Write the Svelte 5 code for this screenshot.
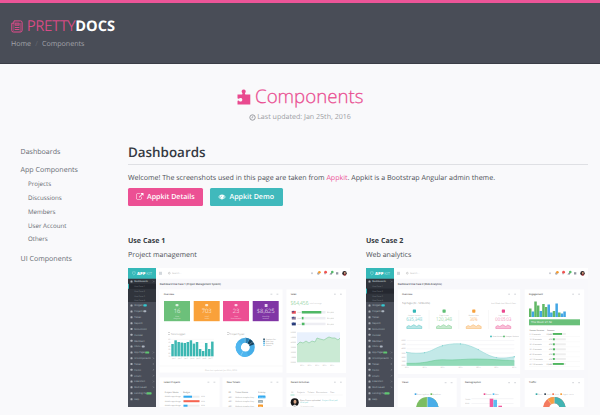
<script>
  const sideRows = [
    ['Dashboards', 13.5], ['Widgets', 37.5], ['Projects', 43.5], ['Tables', 49.3], ['Reports', 55.3],
    ['Discussions', 61], ['Invoices', 66.8], ['Members', 72.8], ['Inbox', 78.5], ['App Pages', 84.5],
    ['UI Components', 90.3], ['Tables', 96], ['Forms', 101.8], ['Charts', 107.7], ['Calendars', 113.5],
    ['Multi Levels', 119.3], ['Landing Page', 125.3], ['Help', 131.3]
  ];
  const tiles = [
    [36, '#6cc07a', '16', 'New', 'Projects'],
    [65.7, '#f9a13a', '703', 'Total', 'Tasks'],
    [95, '#ec4f93', '23', 'New', 'Discussions'],
    [124.7, '#8035a5', '$8,625', 'Monthly', 'Income']
  ];
  const bars = [12.3, 16, 14.3, 13.7, 13.3, 14.3, 16, 12.7, 14.3, 7.3, 5.3, 13.3, 7.3, 14.7];
  const metrics = [
    [48.3, '#35b8b8', '635,348', 'Unique Visitors'],
    [78, '#5fbf75', '120,348', 'Page Views'],
    [107.7, '#f7a13c', '36%', 'Bounce Rate'],
    [137.3, '#ea4b90', '00:05:03', 'Avg. Session']
  ];
  const engage = [8.5, 5.5, 15.5, 11.5, 6, 13, 10, 12.5, 4.5, 6, 13.5, 4.5, 3.5, 5.5];
  const countries = [[42, 9.2], [58, 2], [73, 2], [88, 2.2], [103, 2], [117, 2], [132, 11]];
  const arc = (cx, cy, r, a, b) => {
    const p = (t) => [cx + r * Math.sin(t * 2 * Math.PI), cy - r * Math.cos(t * 2 * Math.PI)];
    const [x1, y1] = p(a), [x2, y2] = p(b);
    return `M${x1} ${y1}A${r} ${r} 0 ${b - a > 0.5 ? 1 : 0} 1 ${x2} ${y2}`;
  };
</script>

{#snippet chrome(active, title, width)}
  <rect width="222" height="139" fill="#f8f8fb" />
  <rect x="28" width="194" height="10.7" fill="#fff" />
  <rect width="28" height="139" fill="#494d58" />
  <rect y="10.7" width="28" height="23.3" fill="#30343c" />
  <rect y={active - 2.7} width="28" height="5" fill="#252830" />
  <rect y={active - 2.7} width="1" height="5" fill="#35b8b8" />
  <rect width="28" height="10.7" fill="#35b8b8" />
  <path d="M4.6 3.8h2.6v2L5.9 7 4.6 5.8z" fill="none" stroke="#9fe0e0" stroke-width=".5" />
  <text class="brand" x="9" y="6.8" font-size="4.3" font-weight="800" fill="#fff" textLength="8.3" lengthAdjust="spacingAndGlyphs">APP</text>
  <text class="brand" x="18.2" y="6.8" font-size="4.3" font-weight="300" fill="#d5f3f3" textLength="6" lengthAdjust="spacingAndGlyphs">KIT</text>
  {#each sideRows as [name, y], i}
    <rect x="2.5" y={y - 1.1} width="2" height="2" rx=".5" fill="#c7cad0" opacity=".8" />
    <text x="6.3" {y} dy=".8" font-size="2.3" fill="#dfe1e5" font-weight={i === 0 ? 700 : 400}>{name}</text>
    {#if i === 0 || i > 8 && i < 16}<path d="M25 {y - .8}l.8.8-.8.8" fill="none" stroke="#aeb1b8" stroke-width=".4" />{/if}
  {/each}
  {#each [18.5, 23.3, 28, 32.6] as y, i}
    <text x="6.3" {y} dy=".8" font-size="2.1" fill="#9da1aa">Use Case {i + 1}</text>
  {/each}
  <rect x="15.3" y="36.3" width="3.5" height="2.2" rx=".7" fill="#35c8d0" />
  <rect x="15.3" y="42.3" width="3" height="2" rx=".7" fill="#aab2bd" />
  <rect x="13.7" y="77.5" width="3" height="2" rx=".7" fill="#aab2bd" />
  <rect x="17.2" y="83.4" width="4" height="2.2" rx=".7" fill="#5fc771" />
  <rect x="18.6" y="124.2" width="5" height="2.2" rx=".7" fill="#5fc771" />
  <path d="M31 4.3h3M31 5.3h3M31 6.3h3" stroke="#9fa8b5" stroke-width=".5" />
  <circle cx="41.3" cy="5.2" r=".9" fill="none" stroke="#999" stroke-width=".4" />
  <text x="44" y="6.1" font-size="2.4" fill="#aaa">Search...</text>
  <circle cx="184" cy="5.3" r="1" fill="#c9ccd3" />
  <circle cx="190.3" cy="5.5" r="1.2" fill="#a8adb8" /><circle cx="191.4" cy="4.2" r="1.3" fill="#f79a2d" />
  <circle cx="197" cy="5.5" r="1" fill="#c2c5cd" /><circle cx="197.6" cy="4.2" r="1.4" fill="#ef5350" />
  <path d="M201.4 6.5l2.6-3v3z" fill="#8b929f" /><circle cx="204.3" cy="4.1" r="1.3" fill="#55bb6a" />
  <rect x="208" y="4.2" width="2.3" height="2.3" fill="#9297a4" />
  <circle cx="216.5" cy="5.3" r="2.2" fill="#30282a" /><circle cx="216.8" cy="4.9" r="1" fill="#d79c7b" /><path d="M215.3 7q1.5-1.5 3 0l-1.4.7z" fill="#c33c40" />
  <text class="title" x="31.8" y="16.500" font-size="2.8" font-weight="600" fill="#444852" textLength={width} lengthAdjust="spacingAndGlyphs">{title}</text>
{/snippet}

{#snippet card(x, y, w, h, title)}
  <rect {x} {y} width={w} height={h} fill="#fff" />
  <text class="title" x={x + 4.3} y={y + 5.4} font-size="2.3" font-weight="600" fill="#555">{title}</text>
  <path d="M{x + w - 12} {y + 4.7}h1.8M{x + w - 6} {y + 4.7}h1.8" stroke="#c8cad0" stroke-width=".8" />
{/snippet}

<div class="page">
  <header>
    <div class="logo">
      <svg width="12" height="13" viewBox="0 0 12 13" fill="none" stroke="#e84b8e">
        <path d="M3 .9h6.500q1.600 0 1.600 1.600v7.800q0 1.700-1.700 1.700H2.400Q.8 12 .8 10.500V3.200h2z" stroke-width="1" />
        <path d="M2.800 3v6.700q0 .9-.8.9M9.300 3v8.700" stroke-width=".5" />
        <path d="M4 3h4.200v2.400H4z" fill="#e84b8e" fill-opacity=".5" stroke-width=".6" />
        <path d="M3.800 7.500h4.600M3.800 9.500h4.600" stroke-width=".9" />
      </svg>
      <span class="pretty">PRETTY</span><b>DOCS</b>
    </div>
    <nav class="crumbs"><span>Home</span><i>/</i><span>Components</span></nav>
  </header>

  <section class="intro">
    <h1>
      <svg width="14" height="16" viewBox="0 0 14 16"><path fill="#e94a8f" d="M.5 5.4h4.2c1 0 .9-.8.5-1.4C4 2.300 4.700.4 6.700.4s2.700 1.900 1.500 3.600c-.4.6-.5 1.400.5 1.400h4.600v10H.5v-3.100c.1-.9.9-.8 1.500-.4 1.500 1.100 3.300.6 3.300-1.200S3.500 8.400 2 9.500c-.6.4-1.400.5-1.500-.4z" /></svg>
      <span>Components</span>
    </h1>
    <p>
      <svg width="7" height="7" viewBox="0 0 7 7" fill="none" stroke="#999ba1"><circle cx="3.500" cy="3.500" r="2.700" stroke-width="1" /><path d="M3.700 1.800v2H2.300" stroke-width=".7" /></svg>
      <span>Last updated: Jan 25th, 2016</span>
    </p>
  </section>

  <div class="body">
    <aside>
      <a class="top">Dashboards</a>
      <a class="top">App Components</a>
      <div class="sub">
        <a>Projects</a><a>Discussions</a><a>Members</a><a>User Account</a><a>Others</a>
      </div>
      <a class="top">UI Components</a>
    </aside>

    <main>
      <h2>Dashboards</h2>
      <p class="welcome">Welcome! The screenshots used in this page are taken from <em>Appkit</em>. Appkit is a Bootstrap Angular admin theme.</p>
      <div class="buttons">
        <a class="btn pink">
          <svg width="7.500" height="7.500" viewBox="0 0 1792 1792"><path fill="#fff" d="M1408 928v320q0 119-84.500 203.500t-203.500 84.500h-832q-119 0-203.500-84.500t-84.500-203.500v-832q0-119 84.500-203.500t203.500-84.500h704q14 0 23 9t9 23v64q0 14-9 23t-23 9h-704q-66 0-113 47t-47 113v832q0 66 47 113t113 47h832q66 0 113-47t47-113v-320q0-14 9-23t23-9h64q14 0 23 9t9 23zm384-864v512q0 26-19 45t-45 19-45-19l-176-176-652 652q-10 10-23 10t-23-10l-114-114q-10-10-10-23t10-23l652-652-176-176q-19-19-19-45t19-45 45-19h512q26 0 45 19t19 45z" /></svg>
          <span>Appkit Details</span>
        </a>
        <a class="btn teal">
          <svg width="8" height="6" viewBox="0 0 8 6"><path fill="#fff" fill-rule="evenodd" d="M.3 3Q1.800.6 4 .6T7.700 3Q6.200 5.400 4 5.400T.3 3zm.8 0Q2 4.500 4 4.800 6 4.500 6.900 3 6.400 2.100 5.500 1.500a1.900 1.900 0 1 1-3 0Q1.600 2.100 1.100 3zM3 2.800h.5q0-.6.6-.7v-.4Q3 1.800 3 2.800z" /></svg>
          <span>Appkit Demo</span>
        </a>
      </div>

      <div class="cases">
        <article>
          <h3>Use Case 1</h3>
          <p>Project management</p>
          <svg class="shot" width="222" height="139" viewBox="0 0 222 139">
            {@render chrome(18.5, 'Dashboard Use Case 1 (Project Management System)', 61)}
            {@render card(31.5, 21.5, 123, 83, 'Overview')}
            {@render card(158.5, 21.5, 59.500, 83.500, 'Sales')}
            {@render card(31.5, 109.5, 60, 30, 'Latest Projects')}
            {@render card(94.5, 109.5, 60, 30, 'New Tickets')}
            {@render card(158.5, 109.5, 59.500, 30, 'Recent Activities')}
            {#each tiles as [x, color, value, a, b], i}
              <rect {x} y="33" width="26" height="20.200" fill={color} />
              {#if i === 3}<path d="M{x + 12} 39v-3h2.800v3z" fill="#fff" opacity=".8" />
              {:else}<rect x={x + 11.500} y="36" width="3" height="2.300" rx=".8" fill="#fff" opacity=".75" />{/if}
              <text class="strong" x={x + 13} y="45.200" font-size="5.800" font-weight="300" fill="#fff" text-anchor="middle">{value}</text>
              <text x={x + 13} y="48.700" font-size="1.900" fill="#fff" text-anchor="middle">{a}</text>
              <text x={x + 13} y="51.200" font-size="1.900" fill="#fff" text-anchor="middle">{b}</text>
            {/each}
            <rect x="40.300" y="64.800" width="1.500" height="1.500" fill="none" stroke="#999" stroke-width=".4" />
            <text x="42.800" y="66.500" font-size="2.300" fill="#777">Tasks Logged</text>
            <rect x="99.600" y="64.800" width="1.500" height="1.500" fill="none" stroke="#999" stroke-width=".4" />
            <text x="102" y="66.500" font-size="2.300" fill="#777">Project Types</text>
            {#each [0, 1, 2, 3, 4, 5] as i}
              <text x="42.300" y={72 + i * 3.400} font-size="1.800" fill="#888" text-anchor="end">{60 - i * 10}</text>
              <path d="M43 {71.400 + i * 3.400}h43" stroke="#eee" stroke-width=".3" />
            {/each}
            {#each bars as h, i}
              <rect x={43.300 + i * 3.060} y={88.300 - h} width="2.500" height={h} fill="#3cb7b2" />
            {/each}
            {#each [0, 1, 2, 3, 4, 5, 6] as i}
              <text x={44 + i * 6.100} y="91" font-size="1.700" fill="#888">Jan {i + 1}</text>
            {/each}
            <circle cx="117.300" cy="79.300" r="7" fill="none" stroke="#45aee8" stroke-width="5" />
            <path d={arc(117.300, 79.300, 7, 0.08, 0.2)} fill="none" stroke="#17435f" stroke-width="5" />
            <path d={arc(117.300, 79.300, 7, 0, 0.07)} fill="none" stroke="#2c80b3" stroke-width="5" />
            <path d={arc(117.300, 79.300, 7, 0.45, 0.86)} fill="none" stroke="#4fb6ef" stroke-width="5" />
            <path d="M117.300 69.800v5M121 76.800l4.500-3.500M115 83.500l-2.500 4.500" stroke="#fff" stroke-width=".3" />
            {#each ['Product Dev', 'Web App', 'Branding', 'Mobile'] as t, i}
              <rect x="135.300" y={70.500 + i * 2} width="1.500" height="1.500" fill={['#17435f', '#2c80b3', '#45aee8', '#74caf8'][i]} />
              <text x="137.700" y={72 + i * 2} font-size="1.800" fill="#777">{t}</text>
            {/each}
            <path d="M31.500 98h123" stroke="#eee" stroke-width=".4" />
            <text x="93" y="102.700" font-size="2.100" fill="#aaa" text-anchor="middle">Data last updated: Jan 25th, 2016</text>

            <text class="strong" x="162.500" y="37.300" font-size="5.600" font-weight="300" fill="#66c178" textLength="18" lengthAdjust="spacingAndGlyphs">$64,456</text>
            <text x="181.500" y="35.500" font-size="1.900" fill="#aaa">total earnings</text>
            {#each [[44.300, 19.500], [50.200, 1.700], [56, 2.700]] as [y, w], i}
              <rect x="163.800" y={y - 1.400} width="4" height="2.800" fill={['#e84c54', '#8a7897', '#273a75'][i]} />
              <path d="M163.800 {y - .5}h1.800v-.9" stroke="#334a91" stroke-width=".9" fill="none" />
              <text x="169.300" y={y + .7} font-size="1.900" fill="#888">USD</text>
              <rect x="173.800" y={y - 1.300} width="23.700" height="2.500" fill="#eeeef3" />
              <rect x="173.800" y={y - 1.300} width={w} height="2.500" fill="#4fb865" />
              <text x="199" y={y + .7} font-size="1.900" fill="#777">$35,200</text>
            {/each}
            <rect x="169" y="64.300" width="43" height="30" fill="#e9f1fd" />
            <path d="M169 77l3-3 3 1 3-2 3 2 3-2 3 1 2-4 3 1 4 1 3-2 2-1 3 1 3 0 3 2 2-2V94.300h-43z" fill="#caead4" />
            <path d="M169 77l3-3 3 1 3-2 3 2 3-2 3 1 2-4 3 1 4 1 3-2 2-1 3 1 3 0 3 2 2-2" fill="none" stroke="#82c797" stroke-width=".6" />
            {#each [0, 1, 2, 3, 4, 5, 6] as i}
              <text x="168" y={65 + i * 5} font-size="1.800" fill="#888" text-anchor="end">{6 - i}0000</text>
            {/each}
            {#each [0, 1, 2, 3, 4] as i}<text x={172 + i * 7.500} y="97.800" font-size="1.800" fill="#888">2015</text>{/each}

            <text x="36.800" y="125" font-size="2.100" font-weight="600" fill="#666">Project Name</text><text x="55" y="125" font-size="2.100" font-weight="600" fill="#666">Budget</text>
            {#each [[128.700, 8.500, '#31aaf0'], [133.200, 16, '#f76450'], [137.700, 4, '#31aaf0']] as [y, w, c]}
              <text x="36.800" y={y + .7} font-size="1.900" fill="#666">Mobile app design</text>
              <rect x="55.500" y={y - 1} width="16" height="2" fill="#eee" /><rect x="55.500" y={y - 1} width={w} height="2" fill={c} />
              <text x="73" y={y + .7} font-size="1.900" fill="#777">60%</text>
            {/each}
            <text x="100.500" y="125" font-size="2.100" font-weight="600" fill="#666">ID</text><text x="107.300" y="125" font-size="2.100" font-weight="600" fill="#666">Ticket Name</text><text x="130" y="125" font-size="2.100" font-weight="600" fill="#666">Priority</text>
            {#each [[129, 7.500, '#31aaf0', 'Medium'], [133.500, 5, '#9aaab0', 'Low'], [138, 5, '#f79a2d', 'High']] as [y, w, c, t]}
              <text x="100.500" y={y + .7} font-size="2" fill="#666">#81</text><text x="107.300" y={y + .7} font-size="1.900" fill="#666">Website Graphic Req...</text>
              <rect x="130" y={y - 1.400} width={w} height="2.700" rx=".4" fill={c} /><text x="130.700" y={y + .6} font-size="1.700" fill="#fff">{t}</text>
            {/each}
            {#each [['All', 163], ['Projects', 169], ['Tickets', 179.500], ['Discussions', 188], ['Files', 202]] as [t, x]}<text {x} y="125.300" font-size="2.100" fill="#777">{t}</text>{/each}
            <path d="M162.500 127h4" stroke="#42bd9f" stroke-width=".5" /><path d="M166.500 127h48" stroke="#eee" stroke-width=".4" />
            <circle cx="166.700" cy="134.300" r="4" fill="#171719" /><ellipse cx="167" cy="133.800" rx="1.500" ry="2" fill="#d7a687" /><path d="M164.500 138q2.300-3 4.500 0z" fill="#ddd" />
            <text x="172" y="132.500" font-size="2.100" fill="#555">Ryan Evans uploaded</text><text x="194" y="132.500" font-size="2.100" fill="#35b8b8">Project Brief.pdf</text>
            <text x="172" y="135.300" font-size="2.100" fill="#35b8b8">brief.pdf</text><text x="172" y="138.800" font-size="1.900" fill="#aaa">12 minutes ago</text>
          </svg>
        </article>

        <article>
          <h3>Use Case 2</h3>
          <p>Web analytics</p>
          <svg class="shot" width="222" height="139" viewBox="0 0 222 139">
            {@render chrome(23.300, 'Dashboard Use Case 2 (Web Analytics)', 44)}
            {@render card(31.700, 21.500, 122.500, 84.500, 'Overview')}
            {@render card(158.700, 21.500, 59.500, 80.500, 'Engagement')}
            {@render card(31.700, 110, 59, 30, 'Views')}
            {@render card(94.700, 110, 59.500, 30, 'Demographics')}
            {@render card(158.700, 110, 59.500, 30, 'Traffic')}
            <text x="36" y="35.500" font-size="2.700" fill="#555" textLength="28" lengthAdjust="spacingAndGlyphs">Top Pages (Pc - 12 Months)</text>
            <text x="125" y="35.800" font-size="2.100" fill="#999" textLength="25" lengthAdjust="spacingAndGlyphs">Last Week  Last Month  Year</text>
            {#each metrics as [x, c, v, label], i}
              <rect x={x - 1.500} y="41.500" width="3.200" height="3.200" rx=".6" fill={c} />
              <text {x} y="47.500" font-size="1.800" fill="#999" text-anchor="middle">{label}</text>
              <text class="strong" {x} y="53.300" font-size="5.300" font-weight="300" fill={c} text-anchor="middle" textLength={i === 2 ? 8 : 16} lengthAdjust="spacingAndGlyphs">{v}</text>
              <path transform="translate({x - 7.500} 56.500)" d="M0 4V2.200l2-1.200 2 1 3-1.800L10 2l2-1.500L15 2v2z" fill={c} fill-opacity=".35" stroke={c} stroke-width=".4" />
              {#if i < 3}<path d="M{x + 14.800} 42v19" stroke="#eee" stroke-width=".4" />{/if}
            {/each}
            <circle cx="125" cy="68.400" r=".9" fill="#35b8b8" /><text x="126.500" y="69.200" font-size="1.900" fill="#777">New Visitors</text>
            <circle cx="138" cy="68.400" r=".9" fill="#4fb865" /><text x="139.500" y="69.200" font-size="1.900" fill="#777">Unique Visitors</text>
            {#each [0, 1, 2, 3, 4, 5, 6] as i}
              <text x="39.500" y={73.100 + i * 4.150} font-size="1.800" fill="#888" text-anchor="end">{6 - i}000</text>
              <path d="M40.700 {72.500 + i * 4.170}h107.600" stroke="#ececef" stroke-width=".4" />
              <text x={38.700 + i * 17.900} y="100.300" font-size="1.800" fill="#888">2015</text>
            {/each}
            <path d="M40.700 84.300C47 85.500 53 85.500 58 84.800 67 83 69 79.500 77.300 77.500 85 75.500 95 75 101 77 112 80 118 86 127 88.800 134 91 141 90 148.300 88.700V97.700H40.700z" fill="#c3e9e8" />
            <path d="M40.700 84.300C47 85.500 53 85.500 58 84.800 67 83 69 79.500 77.300 77.500 85 75.500 95 75 101 77 112 80 118 86 127 88.800 134 91 141 90 148.300 88.700" fill="none" stroke="#84d3d1" stroke-width=".5" />
            <path d="M40.700 95.300C50 95.500 55 95 61 94 68 92.500 72 91.600 77.300 91.700 90 92.500 100 90.800 111 91 125 91.200 137 92.200 148.300 92.700V97.700H40.700z" fill="#91dab7" />
            <path d="M40.700 95.300C50 95.500 55 95 61 94 68 92.500 72 91.600 77.300 91.700 90 92.500 100 90.800 111 91 125 91.200 137 92.200 148.300 92.700" fill="none" stroke="#63c48e" stroke-width=".5" />
            <g fill="#84d3d1"><circle cx="40.700" cy="84.300" r=".6" /><circle cx="58.500" cy="84.700" r=".6" /><circle cx="76.500" cy="77.700" r=".6" /><circle cx="94.500" cy="75.900" r=".6" /><circle cx="112.300" cy="81.500" r=".6" /><circle cx="130.300" cy="89.600" r=".6" /><circle cx="148.300" cy="88.700" r=".7" /></g>

            {#each engage as h, i}
              <rect x={163 + i * 2.640} y={49 - h} width="2.500" height={h} fill={i % 3 === 1 || i === 8 || i === 12 ? '#43a6e4' : '#61b865'} />
            {/each}
            <rect x="163" y="51.300" width="51" height="6" fill="#6ac07a" />
            <text class="strong" x="165" y="55.300" font-size="2.700" fill="#fff">This Week: 21.5k</text>
            <text x="163.500" y="62.500" font-size="1.800" font-weight="600" fill="#555">Session Duration</text><text x="181" y="62.500" font-size="1.800" font-weight="600" fill="#555">Sessions</text>
            {#each countries as [y, w], i}
              <text x="163.500" y={52 + y / 3 + 1} font-size="1.800" fill="#666">{i * 10}-{i * 20 + 10} seconds</text>
              <text x="186" y={52 + y / 3 + 1} font-size="1.800" font-weight="600" fill="#555" text-anchor="end">{i === 0 || i === 6 ? '12,450' : '475'}</text>
              <rect x="186.800" y={51 + y / 3} width="13" height="1.900" fill="#eee" /><rect x="186.800" y={51 + y / 3} width={w} height="1.900" fill="#50b660" />
              <path d="M163 {54.500 + y / 3}h51" stroke="#eee" stroke-width=".3" />
            {/each}

            <rect x="48.700" y="125.300" width="1.700" height="1.700" fill="#43a6e4" /><text x="51" y="127" font-size="1.600" fill="#666">Returning Visitor</text>
            <rect x="64.500" y="125.300" width="1.700" height="1.700" fill="#70bb59" /><text x="66.800" y="127" font-size="1.600" fill="#666">New Visitor</text>
            <circle cx="61.300" cy="140.300" r="11.300" fill="#7cbd62" /><path d="M61.300 129v11.300h11.300A11.300 11.300 0 0 0 61.300 129" fill="#49ade8" /><path d="M61.300 129v11" stroke="#fff" stroke-width=".4" />
            <rect x="117.700" y="125.300" width="1.700" height="1.700" fill="#ea4b90" /><text x="120" y="127" font-size="1.700" fill="#666">Female</text>
            <rect x="126.700" y="125.300" width="1.700" height="1.700" fill="#53b9ef" /><text x="129" y="127" font-size="1.700" fill="#666">Male</text>
            <path d="M105.500 130.700h42M105.500 135.500h42" stroke="#e7e7ea" stroke-width=".4" /><text x="99" y="131.500" font-size="1.900" fill="#888">10000</text><text x="99" y="136.200" font-size="1.900" fill="#888">8000</text>
            <rect x="123.700" y="130.700" width="3.600" height="9" fill="#f05ba0" /><rect x="127.400" y="131.800" width="3.600" height="8" fill="#5bbdf0" /><rect x="132.400" y="137.700" width="3.600" height="2" fill="#f05ba0" />
            {#each [['Direct', 169.700, '#35a9a9'], ['Search', 178.300, '#3c4c5c'], ['Social', 186.300, '#f47755'], ['Organic search', 194.300, '#f7a13c']] as [t, x, c]}
              <rect {x} y="125.300" width="1.700" height="1.700" fill={c} /><text x={x + 2.200} y="127" font-size="1.600" fill="#666">{t}</text>
            {/each}
            <circle cx="188.300" cy="140.300" r="8.200" fill="none" stroke="#f47b60" stroke-width="6.200" />
            <path d={arc(188.300, 140.300, 8.200, 0, 0.3)} fill="none" stroke="#42b4b3" stroke-width="6.200" />
            <path d={arc(188.300, 140.300, 8.200, 0.9, 1)} fill="none" stroke="#f6a044" stroke-width="6.200" />
            <path d="M188.300 129v6M181.700 131.300l3.500 4.800" stroke="#fff" stroke-width=".3" />
          </svg>
        </article>
      </div>
    </main>
  </div>
</div>

<style>
  :global(body) { background: #f9f9fb; }
  .page { width: 600px; height: 415px; overflow: hidden; background: #f9f9fb; font-family: "Open Sans", sans-serif; color: #4c4f56; font-size: 7.080px; line-height: 10px; text-rendering: geometricPrecision; }
  h1, h2, h3, p { margin: 0; }
  header { box-sizing: border-box; height: 64px; border-top: 3px solid #ec5598; border-bottom: 1px solid #3a3d46; background: #494d57; padding: 13px 11px 0; }
  .logo { display: flex; align-items: center; height: 20px; font-size: 14.600px; line-height: 20px; color: #fff; }
  .logo svg { margin-right: 4px; }
  .pretty { color: #e84b8e; font-weight: 300; -webkit-text-stroke: .2px #e84b8e; }
  .crumbs { display: flex; margin-top: 3px; color: #a2a4aa; }
  .crumbs i { width: 11px; text-align: center; color: #656871; font-style: normal; }
  .intro { display: flex; flex-direction: column; align-items: center; padding-top: 21px; }
  h1 { display: flex; align-items: center; gap: 4.500px; height: 24px; color: #e94a8f; font-weight: 300; font-size: 18.700px; line-height: 24px; -webkit-text-stroke: .25px #e94a8f; }
  .intro p { display: flex; align-items: center; gap: 1px; height: 10px; margin-top: 3px; color: #9b9da3; }
  .body { display: flex; padding: 22px 12px 0 20.500px; }
  aside { box-sizing: border-box; width: 107.5px; padding-top: 3px; display: flex; flex-direction: column; color: #666971; }
  .top { height: 10px; margin-bottom: 7.600px; }
  .sub { display: flex; flex-direction: column; gap: 3.800px; padding-left: 7.500px; margin: -3px 0 9.200px; font-size: 6.200px; }
  main { width: 460px; }
  h2 { height: 19.500px; border-bottom: 1px solid #dfe0e4; color: #353942; font-size: 13.400px; line-height: 16px; font-weight: 600; }
  .welcome { margin-top: 8px; white-space: nowrap; }
  em { font-style: normal; color: #ec5598; }
  .buttons { display: flex; gap: 7px; margin-top: 5px; }
  .btn { box-sizing: border-box; display: flex; align-items: center; height: 18.500px; border-radius: 1.500px; color: #fff; font-weight: 600; padding-left: 8px; }
  .btn svg { margin-right: 3.500px; }
  .pink { width: 75px; background: #ec5094; }
  .teal { width: 72.500px; background: #40b9bc; }
  .cases { display: flex; gap: 16px; margin-top: 30px; }
  article { width: 222px; }
  h3 { font-size: 7.080px; line-height: 10px; color: #353942; font-weight: 700; }
  article p { margin-top: 4px; }
  .shot { display: block; margin-top: 8px; overflow: hidden; }
  .shot text { opacity: .7; }
  .shot text.strong, .shot text.brand, .shot text.title { opacity: 1; }
</style>
